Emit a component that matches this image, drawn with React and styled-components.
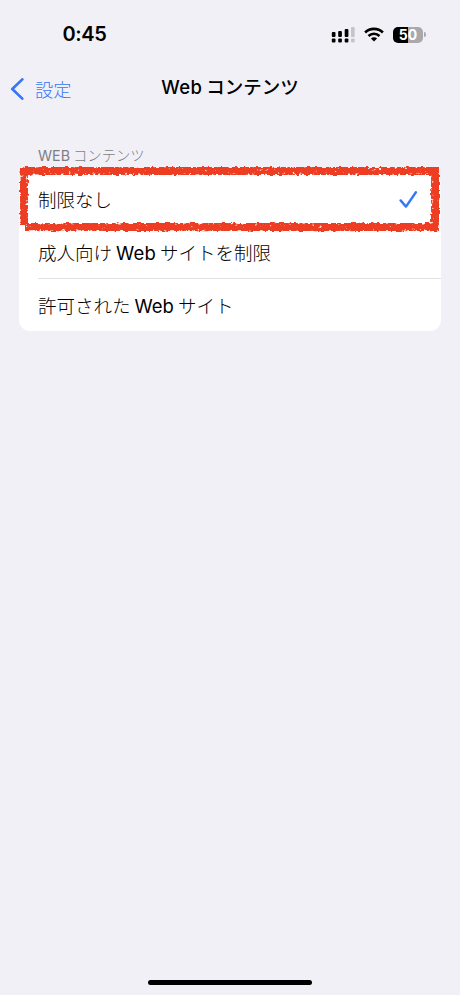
import React from "react";
import styled, { createGlobalStyle } from "styled-components";

const GlobalStyle = createGlobalStyle`
  * { box-sizing: border-box; }
  body { margin: 0; background: #f1f0f6; }
`;

const Screen = styled.div`
  width: 460px;
  height: 995px;
  display: flex;
  flex-direction: column;
  background: #f1f0f6;
  color: #000;
  font-family: Inter, "Noto Sans CJK JP", sans-serif;
  overflow: hidden;
`;

const StatusBar = styled.header`
  height: 69px;
  padding: 0 34px 0 62.5px;
  display: flex;
  align-items: center;
  justify-content: space-between;
`;

const Clock = styled.time`
  font-size: 20px;
  font-weight: 600;
  line-height: 25px;
  letter-spacing: -0.35px;
`;

const StatusIcons = styled.div`
  display: flex;
  align-items: center;
  gap: 9px;
`;

const Battery = styled.div`
  display: flex;
  align-items: center;
  gap: 1px;
`;

const BatteryBody = styled.div`
  width: 30px;
  height: 16px;
  border-radius: 5px;
  background: linear-gradient(90deg, #000 50%, #a9a9ad 50%);
  color: #fff;
  font-size: 14px;
  font-weight: 700;
  line-height: 16px;
  text-align: center;
`;

const BatteryTip = styled.div`
  width: 2px;
  height: 5px;
  border-radius: 0 2px 2px 0;
  background: #a9a9ad;
`;

const NavBar = styled.nav`
  height: 40px;
  padding: 0 10px;
  display: grid;
  grid-template-columns: 1fr auto 1fr;
  align-items: center;
`;

const BackButton = styled.button`
  display: flex;
  align-items: center;
  gap: 11px;
  padding: 0;
  border: 0;
  background: none;
  color: #3478f6;
  font: inherit;
  font-size: 18.2px;
  font-weight: 300;
  line-height: 24px;
`;

const BackLabel = styled.span`
  padding-top: 2px;
`;

const Title = styled.h1`
  margin: 0 0 4px;
  font-size: 18.5px;
  font-weight: 500;
  line-height: 24px;
  white-space: nowrap;
`;

const Latin = styled.span`
  margin: 0 ${(p) => p.$after ?? 4}px 0 ${(p) => p.$before ?? 0}px;
  font-weight: ${(p) => p.$weight ?? 400};
  letter-spacing: ${(p) => p.$spacing ?? 0}px;
`;

const Section = styled.section`
  margin: 37px 19px 0;
`;

const SectionTitle = styled.h2`
  margin: 0;
  height: 26px;
  padding-left: 19px;
  color: #7e7e84;
  font-size: 14.3px;
  font-weight: 300;
  line-height: 20px;
`;

const List = styled.div`
  position: relative;
  border-radius: 11px;
  background: #fff;
`;

const Row = styled.div`
  height: 53px;
  margin-left: 19px;
  padding: 2px 23px 0 0;
  display: flex;
  align-items: center;
  justify-content: space-between;
  border-top: 1px solid ${(p) => (p.$divided ? "#e2e2e5" : "transparent")};
  font-size: 18.5px;
  font-weight: 300;
  line-height: 24px;
`;

const MarkerFrame = styled.svg`
  position: absolute;
  left: -4px;
  top: -10px;
  pointer-events: none;
`;

const HomeIndicator = styled.div`
  width: 164px;
  height: 5px;
  margin: auto auto 10px 148px;
  border-radius: 3px;
  background: #000;
`;

function SignalIcon() {
  return (
    <svg width="24" height="16" viewBox="0 0 24 16">
      <g fill="#000">
        <rect x="0.8" y="5" width="3.7" height="5" rx="1" />
        <rect x="7.2" y="4" width="3.7" height="6" rx="1" />
        <rect x="13.7" y="2" width="3.7" height="8" rx="1" />
        <rect x="0.8" y="11.6" width="3.7" height="4" rx="1" />
        <rect x="7.2" y="11.6" width="3.7" height="4" rx="1" />
        <rect x="13.7" y="11.6" width="3.7" height="4" rx="1" />
      </g>
      <g fill="#c4c4c9">
        <rect x="20" y="0" width="3.7" height="10" rx="1" />
        <rect x="20" y="11.6" width="3.7" height="4" rx="1" />
      </g>
    </svg>
  );
}

function WifiIcon() {
  return (
    <svg width="20" height="15" viewBox="0 0 20 15">
      <g fill="none" stroke="#000" strokeWidth="2.6">
        <path d="M1.1 5.5a12.7 12.7 0 0 1 17.8 0" />
        <path d="M4.5 9a8 8 0 0 1 11 0" />
      </g>
      <path d="M10 14.6 6.9 11.5a4.4 4.4 0 0 1 6.2 0Z" fill="#000" />
    </svg>
  );
}

function BackIcon() {
  return (
    <svg width="14" height="22" viewBox="0 0 14 22">
      <path d="M12.3 1.4 2.3 11l10 9.6" fill="none" stroke="#3478f6" strokeWidth="2.7" strokeLinecap="round" strokeLinejoin="round" />
    </svg>
  );
}

function CheckIcon() {
  return (
    <svg width="19" height="18" viewBox="0 0 19 18">
      <path d="M1.6 9.4 7 15.6 16.9 1.3" fill="none" stroke="#3478f6" strokeWidth="2.4" strokeLinecap="round" strokeLinejoin="round" />
    </svg>
  );
}

function RoughFrame() {
  return (
    <MarkerFrame width="430" height="76" viewBox="0 0 430 76">
      <defs>
        <filter id="crayon" x="0" y="0" width="430" height="76" filterUnits="userSpaceOnUse" colorInterpolationFilters="sRGB">
          <feTurbulence type="fractalNoise" baseFrequency="0.22" numOctaves="2" seed="8" result="noise" />
          <feDisplacementMap in="SourceGraphic" in2="noise" scale="4" xChannelSelector="R" yChannelSelector="G" result="edge" />
          <feTurbulence type="fractalNoise" baseFrequency="0.3" numOctaves="2" seed="21" />
          <feColorMatrix values="0 0 0 0 0  0 0 0 0 0  0 0 0 0 0  7 0 0 0 -1.9" result="grain" />
          <feComposite in="edge" in2="grain" operator="in" />
        </filter>
        <filter id="core" x="0" y="0" width="430" height="76" filterUnits="userSpaceOnUse" colorInterpolationFilters="sRGB">
          <feTurbulence type="fractalNoise" baseFrequency="0.25" numOctaves="2" seed="5" result="noise" />
          <feDisplacementMap in="SourceGraphic" in2="noise" scale="3" xChannelSelector="R" yChannelSelector="G" result="edge" />
          <feTurbulence type="fractalNoise" baseFrequency="0.3" numOctaves="2" seed="14" />
          <feColorMatrix values="0 0 0 0 0  0 0 0 0 0  0 0 0 0 0  9 0 0 0 -2.5" result="grain" />
          <feComposite in="edge" in2="grain" operator="in" />
        </filter>
      </defs>
      <rect x="10.5" y="10.5" width="408" height="53" fill="none" stroke="#fff" strokeWidth="6" />
      <g fill="none" stroke="#ed3d23">
        <path d="M9 61V9H420V65H10" strokeWidth="8" filter="url(#crayon)" />
        <path d="M8.4 63V8.7H420.5V65.4H10" strokeWidth="5.6" filter="url(#core)" />
      </g>
    </MarkerFrame>
  );
}

export default function App() {
  return (
    <Screen>
      <GlobalStyle />
      <StatusBar>
        <Clock>0:45</Clock>
        <StatusIcons>
          <SignalIcon />
          <WifiIcon />
          <Battery>
            <BatteryBody>50</BatteryBody>
            <BatteryTip />
          </Battery>
        </StatusIcons>
      </StatusBar>
      <NavBar>
        <BackButton><BackIcon /><BackLabel>設定</BackLabel></BackButton>
        <Title><Latin $weight={550} $spacing={0.3}>Web</Latin>コンテンツ</Title>
      </NavBar>
      <Section>
        <SectionTitle><Latin $after={3}>WEB</Latin>コンテンツ</SectionTitle>
        <List>
          <Row><span>制限なし</span><CheckIcon /></Row>
          <Row><span>成人向け<Latin $before={4} $spacing={0.2}>Web</Latin>サイトを制限</span></Row>
          <Row $divided><span>許可された<Latin $before={4}>Web</Latin>サイト</span></Row>
          <RoughFrame />
        </List>
      </Section>
      <HomeIndicator />
    </Screen>
  );
}
